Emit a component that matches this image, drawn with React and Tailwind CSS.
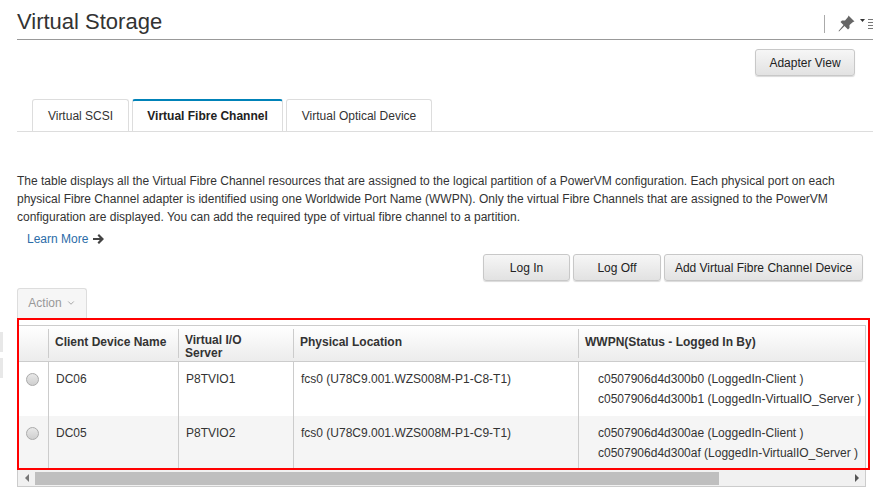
import { ChevronDown } from 'lucide-react';

const rows = [
  {
    name: 'DC06',
    server: 'P8TVIO1',
    location: 'fcs0 (U78C9.001.WZS008M-P1-C8-T1)',
    wwpn: ['c0507906d4d300b0 (LoggedIn-Client )', 'c0507906d4d300b1 (LoggedIn-VirtualIO_Server )'],
    height: 'h-[54px]',
    bg: 'bg-white',
  },
  {
    name: 'DC05',
    server: 'P8TVIO2',
    location: 'fcs0 (U78C9.001.WZS008M-P1-C9-T1)',
    wwpn: ['c0507906d4d300ae (LoggedIn-Client )', 'c0507906d4d300af (LoggedIn-VirtualIO_Server )'],
    height: 'h-[52px]',
    bg: 'bg-[#f5f5f5]',
  },
];

const Btn = ({ className = '', children }) => (
  <button className={`h-[27px] rounded-[3px] border border-[#c8c8c8] bg-gradient-to-b from-[#f6f6f6] to-[#e2e2e2] text-[12px] text-[#222] shadow-[0_1px_1px_rgba(0,0,0,0.15)] ${className}`}>
    {children}
  </button>
);

const Tab = ({ active, className = '', children }) => (
  <div className={`flex h-[32px] items-center justify-center rounded-t-[3px] border border-b-0 text-[12px] ${active ? 'border-[#ddd] border-t-2 border-t-[#0082b8] font-bold text-[#222]' : 'border-[#ddd] text-[#333]'} ${className}`}>
    {children}
  </div>
);

const App = () => (
  <div className="h-[491px] w-[873px] overflow-hidden bg-white font-['Liberation_Sans',Arial,sans-serif] text-[#333]">
    <div className="relative pl-[17px]">
      {/* Title */}
      <div className="flex h-[40px] items-center justify-between border-b border-[#999] pt-[5px]">
        <h1 className="text-[22px] leading-none text-[#333]">Virtual Storage</h1>
        <div className="flex items-center">
          <div className="mr-[13px] mt-[3px] h-[18px] w-px bg-[#aaa]" />
          <svg width="17" height="17" viewBox="0 0 17 17" className="mt-[3px]">
            <path d="M10.500.5l6 6-1.500.5-3.500 3v3L10 14.500 6.500 11 1 16.500l-.5-.5 5-6-3-3L4 5.500h3L10 2z" fill="#666" />
          </svg>
          <svg width="13" height="14" viewBox="0 0 13 14" className="ml-[5px] mt-[5px]">
            <path d="M0 1h5L2.500 4z" fill="#333" />
            <path d="M8 1.500h5M8 4.500h5M8 7.500h5M8 10.500h5" stroke="#777" strokeWidth="1" />
          </svg>
        </div>
      </div>

      {/* Adapter button */}
      <div className="mt-[9px] flex justify-end pr-[18px]">
        <Btn className="w-[100px]">Adapter View</Btn>
      </div>

      {/* Tabs */}
      <div className="mt-[23px] flex gap-[3px] border-b border-[#ddd] pl-[15px]">
        <Tab className="w-[97px]">Virtual SCSI</Tab>
        <Tab active className="w-[151px]">Virtual Fibre Channel</Tab>
        <Tab className="w-[146px]">Virtual Optical Device</Tab>
      </div>

      {/* Description */}
      <p className="mt-[40px] w-[840px] text-[12px] leading-[18px] text-[#333]">
        The table displays all the Virtual Fibre Channel resources that are assigned to the logical partition of a PowerVM configuration. Each physical port on each physical Fibre Channel adapter is identified using one Worldwide Port Name (WWPN). Only the virtual Fibre Channels that are assigned to the PowerVM configuration are displayed. You can add the required type of virtual fibre channel to a partition.
      </p>
      <div className="ml-[10px] mt-[3px] flex h-[20px] items-center gap-[5px] text-[12px] text-[#2b6ca8]">
        Learn More
        <svg width="11" height="10" viewBox="0 0 11 10" className="mb-[1px]">
          <path d="M6 0l5 5-5 5-1.500-1.500L6.800 6H0V4h6.800L4.500 1.500z" fill="#444" />
        </svg>
      </div>

      {/* Actions */}
      <div className="mt-[5px] flex justify-end gap-[3px] pr-[10px]">
        <Btn className="w-[87px]">Log In</Btn>
        <Btn className="w-[88px]">Log Off</Btn>
        <Btn className="w-[199px]">Add Virtual Fibre Channel Device</Btn>
      </div>

      <div className="mt-[7px] flex h-[30px] w-[70px] items-center justify-center gap-[4px] rounded-t-[3px] border border-b-0 border-[#ddd] bg-[#f6f6f6] pb-[2px] text-[12px] text-[#999]">
        Action
        <ChevronDown size={10} />
      </div>

      {/* Table */}
      <div className="w-[853px] border-2 border-[#f00] pr-[2px] pt-[5px]">
        <div className="border-r border-t border-[#ccc]">
          <div className="flex h-[36px] items-center border-b border-[#ccc] bg-gradient-to-b from-white to-[#ececec] text-[12px] font-bold text-[#333]">
            <div className="h-[29px] w-[30px] border-r border-[#ccc]" />
            <div className="flex h-[29px] w-[130px] items-center border-r border-[#ccc] pb-[3px] pl-[6px]">Client Device Name</div>
            <div className="flex h-[29px] w-[115px] items-center border-r border-[#ccc] pl-[6px] pt-[7px] leading-[13px]">Virtual I/O<br />Server</div>
            <div className="flex h-[29px] w-[285px] items-center border-r border-[#ccc] pb-[3px] pl-[6px]">Physical Location</div>
            <div className="flex h-[29px] items-center pb-[3px] pl-[6px]">WWPN(Status - Logged In By)</div>
          </div>
          {rows.map((row) => (
            <div key={row.name} className={`flex text-[12px] text-[#333] ${row.height} ${row.bg}`}>
              <div className="w-[30px] border-r border-[#ccc] pl-[7px] pt-[11px]">
                <div className="h-[13px] w-[13px] rounded-full border border-[#aaa] bg-gradient-to-b from-[#e8e8e8] to-[#cfcfcf]" />
              </div>
              <div className="w-[130px] border-r border-[#ccc] pl-[7px] pt-[8px]">{row.name}</div>
              <div className="w-[115px] border-r border-[#ccc] pl-[7px] pt-[8px]">{row.server}</div>
              <div className="w-[285px] border-r border-[#ccc] pl-[7px] pt-[8px]">{row.location}</div>
              <div className="whitespace-nowrap pl-[19px] pt-[7px] leading-[20px]">
                {row.wwpn.map((w) => <div key={w}>{w}</div>)}
              </div>
            </div>
          ))}
        </div>
      </div>

      {/* Scrollbar */}
      <div className="flex h-[17px] w-[849px] items-center border-x border-b border-[#ccc] bg-[#f1f1f1]">
        <div className="flex w-[17px] justify-center">
          <div className="h-0 w-0 border-y-[4px] border-r-[4px] border-y-transparent border-r-[#777]" />
        </div>
        <div className="h-[13px] w-[684px] bg-[#bfbfbf]" />
        <div className="flex-1" />
        <div className="flex w-[17px] justify-center">
          <div className="h-0 w-0 border-y-[4px] border-l-[4px] border-y-transparent border-l-[#555]" />
        </div>
      </div>

      {/* Splitter handle */}
      <div className="absolute left-0 top-[332px] h-[20px] w-[3px] bg-[#e8e8e8]" />
      <div className="absolute left-0 top-[358px] h-[20px] w-[3px] bg-[#e8e8e8]" />
    </div>
  </div>
);

export default App;
